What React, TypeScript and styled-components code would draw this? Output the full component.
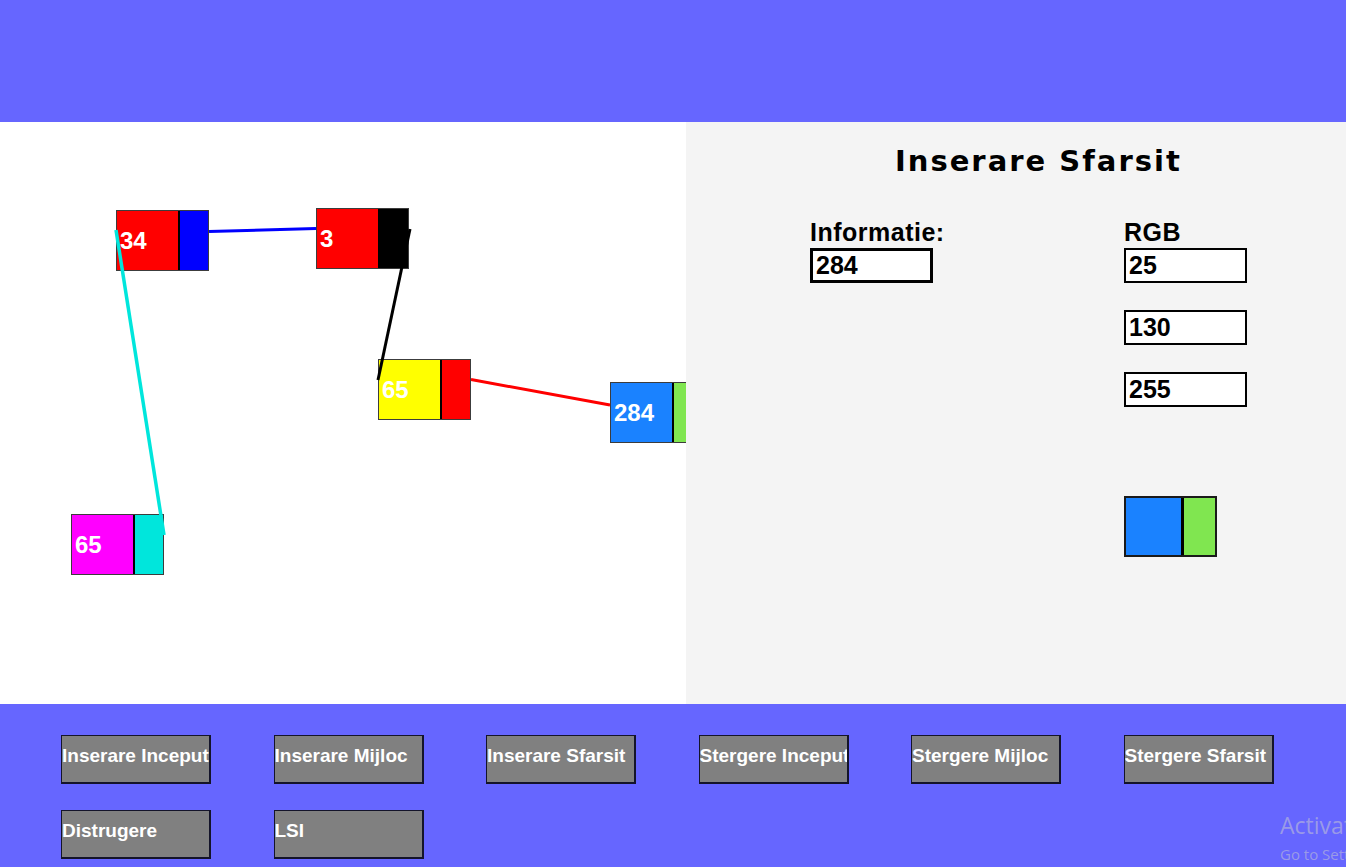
import React from "react";
import styled, { createGlobalStyle } from "styled-components";

const Global = createGlobalStyle`
  html, body { margin: 0; padding: 0; }
  body { font-family: "Liberation Sans", Arial, sans-serif; }
  * { box-sizing: border-box; }
`;

const Page = styled.div`
  width: 100vw;
  height: 100vh;
  display: flex;
  flex-direction: column;
  position: relative;
  overflow: hidden;
`;

const Header = styled.div`
  height: 122px;
  flex: 0 0 122px;
  background: #6666ff;
`;

const Main = styled.div`
  flex: 0 0 582px;
  display: flex;
`;

const Canvas = styled.div`
  width: 686px;
  flex: 0 0 686px;
  position: relative;
  overflow: hidden;
  background: #ffffff;
`;

const Links = styled.svg`
  position: absolute;
  left: 0;
  top: 0;
  pointer-events: none;
`;

const NodeBox = styled.div<{ $w?: number }>`
  width: 93px;
  height: 61px;
  display: flex;
  border: 1px solid #3c3c3c;
`;

const CanvasNode = styled(NodeBox)<{ $x: number; $y: number }>`
  position: absolute;
  left: ${(p) => p.$x}px;
  top: ${(p) => p.$y}px;
`;

const InfoCell = styled.div<{ $c: string }>`
  flex: 0 0 63px;
  background: ${(p) => p.$c};
  border-right: 2px solid #000;
  display: flex;
  align-items: center;
  padding-left: 3px;
  color: #fff;
  font-family: "Liberation Sans", Arial, sans-serif;
  font-weight: bold;
  font-size: 24px;
  line-height: 24px;
`;

const PtrCell = styled.div<{ $c: string }>`
  flex: 1;
  background: ${(p) => p.$c};
`;

const Panel = styled.div`
  flex: 1;
  background: #f4f4f4;
  padding-top: 22px;
  display: flex;
  flex-direction: column;
`;

const Title = styled.div`
  padding-left: 209px;
  font-family: "DejaVu Sans", sans-serif;
  font-weight: bold;
  font-size: 29px;
  line-height: 34px;
  letter-spacing: 2px;
  color: #000;
`;

const Form = styled.div`
  margin-top: 42px;
  padding-left: 124px;
  display: grid;
  grid-template-columns: 314px 130px;
  align-items: start;
`;

const Column = styled.div`
  display: flex;
  flex-direction: column;
`;

const Label = styled.div`
  font-family: "Liberation Sans", Arial, sans-serif;
  font-weight: bold;
  font-size: 25px;
  line-height: 25px;
  letter-spacing: 0.5px;
  color: #000;
  margin-bottom: 3px;
`;

const Fields = styled.div`
  display: flex;
  flex-direction: column;
  gap: 27px;
`;

const Field = styled.div<{ $thick?: boolean }>`
  width: 123px;
  height: 35px;
  background: #fff;
  border: ${(p) => (p.$thick ? 3 : 2)}px solid #000;
  display: flex;
  align-items: center;
  padding-left: ${(p) => (p.$thick ? 3 : 3)}px;
  font-family: "Liberation Sans", Arial, sans-serif;
  font-weight: bold;
  font-size: 25px;
  line-height: 25px;
  color: #000;
`;

const Preview = styled(NodeBox)`
  margin-top: 89px;
  border: 2px solid #1a1a1a;
`;

const PreviewInfo = styled(InfoCell)`
  flex: 0 0 58px;
  border-right-width: 3px;
`;

const Footer = styled.div`
  flex: 1;
  background: #6666ff;
  padding: 31px 0 0 61px;
  display: grid;
  grid-template-columns: repeat(6, 150px);
  grid-auto-rows: 49px;
  column-gap: 62.5px;
  row-gap: 26px;
  align-content: start;
`;

const Button = styled.div`
  background: #808080;
  border-style: solid;
  border-color: #14142a;
  border-width: 1px 2px 2px 1px;
  display: flex;
  align-items: center;
  padding-bottom: 8px;
  color: #fff;
  font-family: "Liberation Sans", Arial, sans-serif;
  font-weight: bold;
  font-size: 19px;
  line-height: 19px;
  white-space: nowrap;
  overflow: hidden;
`;

const Watermark = styled.div`
  position: absolute;
  left: 1280px;
  top: 810px;
  white-space: nowrap;
  font-family: "Open Sans", "Noto Sans", sans-serif;
  color: rgba(190, 190, 215, 0.6);
`;

const WmBig = styled.div`
  font-size: 23px;
  line-height: 30px;
`;

const WmSmall = styled.div`
  font-size: 15px;
  line-height: 20px;
  margin-top: 4px;
`;

const nodes = [
  { x: 116, y: 88, info: "34", a: "#ff0000", b: "#0000ff" },
  { x: 316, y: 86, info: "3", a: "#ff0000", b: "#000000" },
  { x: 378, y: 237, info: "65", a: "#ffff00", b: "#ff0000" },
  { x: 610, y: 260, info: "284", a: "#1a82ff", b: "#80e650" },
  { x: 71, y: 392, info: "65", a: "#ff00ff", b: "#00e6dc" },
];

const links = [
  { x1: 209, y1: 109.5, x2: 316, y2: 106.5, c: "#0000ff", w: 3 },
  { x1: 410, y1: 107, x2: 378, y2: 258, c: "#000000", w: 3 },
  { x1: 471, y1: 257.5, x2: 610, y2: 283, c: "#ff0000", w: 3 },
  { x1: 116, y1: 108, x2: 164, y2: 413, c: "#00e6dc", w: 3.5 },
];

const buttons = [
  "Inserare Inceput",
  "Inserare Mijloc",
  "Inserare Sfarsit",
  "Stergere Inceput",
  "Stergere Mijloc",
  "Stergere Sfarsit",
  "Distrugere",
  "LSI",
];

export default function App() {
  return (
    <Page>
      <Global />
      <Header />
      <Main>
        <Canvas>
          {nodes.map((n, i) => (
            <CanvasNode key={i} $x={n.x} $y={n.y}>
              <InfoCell $c={n.a}>{n.info}</InfoCell>
              <PtrCell $c={n.b} />
            </CanvasNode>
          ))}
          <Links width={686} height={582} viewBox="0 0 686 582">
            {links.map((l, i) => (
              <line
                key={i}
                x1={l.x1}
                y1={l.y1}
                x2={l.x2}
                y2={l.y2}
                stroke={l.c}
                strokeWidth={l.w}
              />
            ))}
          </Links>
        </Canvas>
        <Panel>
          <Title>Inserare Sfarsit</Title>
          <Form>
            <Column>
              <Label>Informatie:</Label>
              <Field $thick>284</Field>
            </Column>
            <Column>
              <Label>RGB</Label>
              <Fields>
                <Field>25</Field>
                <Field>130</Field>
                <Field>255</Field>
              </Fields>
              <Preview>
                <PreviewInfo $c="#1a82ff" />
                <PtrCell $c="#80e650" />
              </Preview>
            </Column>
          </Form>
        </Panel>
      </Main>
      <Footer>
        {buttons.map((b) => (
          <Button key={b}>{b}</Button>
        ))}
      </Footer>
      <Watermark>
        <WmBig>Activate Windows</WmBig>
        <WmSmall>Go to Settings to activate Windows.</WmSmall>
      </Watermark>
    </Page>
  );
}
